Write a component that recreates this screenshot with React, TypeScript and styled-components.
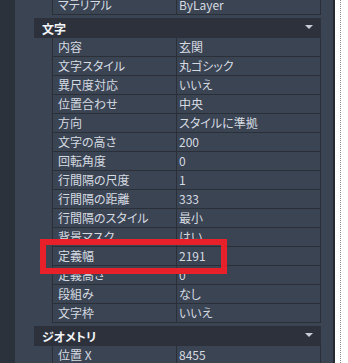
import React from "react";
import styled, { createGlobalStyle } from "styled-components";

const Global = createGlobalStyle`
  html, body { margin: 0; padding: 0; background: #3b4453; overflow: hidden; }
  body { font-family: "Noto Sans CJK JP", "Noto Sans", sans-serif; font-feature-settings: "palt"; }
`;

const Page = styled.div`
  display: flex;
  width: 348px;
  height: 363px;
  overflow: hidden;
  position: relative;
`;

const LeftStrip = styled.div`
  width: 15px;
  flex: none;
  background: #2c323c;
`;

const Panel = styled.div`
  width: 318px;
  flex: none;
  background: #3b4453;
  box-sizing: border-box;
  padding: 0 12px 0 19px;
`;

const Content = styled.div`
  margin-top: -4px;
  display: flex;
  flex-direction: column;
`;

const Divider = styled.div`
  width: 2px;
  flex: none;
  background: #262b33;
`;

const WhiteArea = styled.div`
  flex: 1;
  background: #ffffff;
  display: flex;
  padding-left: 5px;
`;

const Dotted = styled.div`
  border-left: 1px dotted #8a8a8a;
  height: 100%;
`;

const Group = styled.div`
  display: flex;
  flex-direction: column;
  margin-bottom: 3px;
`;

const Header = styled.div`
  height: 20px;
  background: #2c313b;
  display: flex;
  align-items: center;
  justify-content: space-between;
  padding: 0 8px 0 8px;
  color: #f2f4f7;
  font-size: 12px;
  font-weight: 700;
`;

const Arrow = styled.span`
  width: 0;
  height: 0;
  border-left: 4px solid transparent;
  border-right: 4px solid transparent;
  border-top: 4px solid #c9ced6;
  margin-top: -3px;
`;

const Rows = styled.div`
  margin-left: 18px;
  border-left: 1px solid #2a2f38;
  border-right: 1px solid #2a2f38;
  display: flex;
  flex-direction: column;
`;

const Row = styled.div`
  display: grid;
  grid-template-columns: 124px 1fr;
  height: 19px;
  box-sizing: border-box;
  border-bottom: 1px solid #2a2f38;
  font-size: 12px;
  line-height: 18px;
  color: #d6dbe1;
`;

const Label = styled.div`
  padding-left: 5px;
  border-right: 1px solid #2a2f38;
  white-space: nowrap;
  overflow: hidden;
`;

const Value = styled.div`
  padding-left: 2px;
  white-space: nowrap;
  overflow: hidden;
`;

const Highlight = styled.div`
  position: absolute;
  left: 40px;
  top: 239px;
  width: 187px;
  height: 35px;
  box-sizing: border-box;
  border: 6px solid #e8202a;
  pointer-events: none;
`;

type Item = [string, string];

const textItems: Item[] = [
  ["内容", "玄関"],
  ["文字スタイル", "丸ゴシック"],
  ["異尺度対応", "いいえ"],
  ["位置合わせ", "中央"],
  ["方向", "スタイルに準拠"],
  ["文字の高さ", "200"],
  ["回転角度", "0"],
  ["行間隔の尺度", "1"],
  ["行間隔の距離", "333"],
  ["行間隔のスタイル", "最小"],
  ["背景マスク", "はい"],
  ["定義幅", "2191"],
  ["定義高さ", "0"],
  ["段組み", "なし"],
  ["文字枠", "いいえ"],
];

const geoItems: Item[] = [["位置 X", "8455"]];

const RowList = ({ items }: { items: Item[] }) => (
  <Rows>
    {items.map(([l, v]) => (
      <Row key={l}>
        <Label>{l}</Label>
        <Value>{v}</Value>
      </Row>
    ))}
  </Rows>
);

const Section = ({ title, items }: { title: string; items: Item[] }) => (
  <Group>
    <Header>
      <span>{title}</span>
      <Arrow />
    </Header>
    <RowList items={items} />
  </Group>
);

export default function App() {
  return (
    <>
      <Global />
      <Page>
        <LeftStrip />
        <Panel>
          <Content>
            <Group>
              <RowList items={[["マテリアル", "ByLayer"]]} />
            </Group>
            <Section title="文字" items={textItems} />
            <Section title="ジオメトリ" items={geoItems} />
          </Content>
        </Panel>
        <Divider />
        <WhiteArea>
          <Dotted />
        </WhiteArea>
        <Highlight />
      </Page>
    </>
  );
}
